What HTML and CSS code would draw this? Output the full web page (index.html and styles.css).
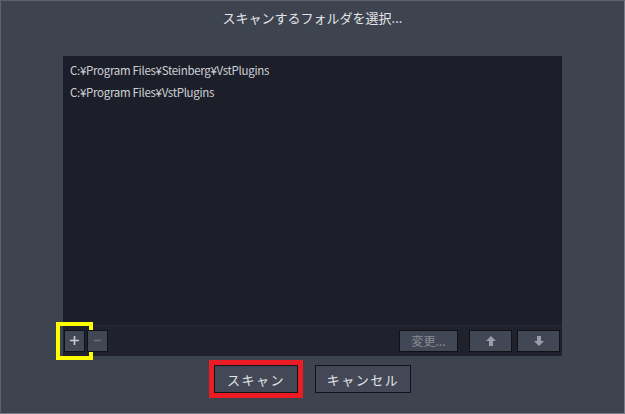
FILE: index.html
```html
<!DOCTYPE html>
<html lang="ja">
<head>
    <meta charset="UTF-8">
    <title>スキャンするフォルダを選択</title>
    <link rel="stylesheet" href="styles.css">
</head>
<body>
    <div class="dialog">
        <h1 class="dialog-title">スキャンするフォルダを選択...</h1>

        <div class="folder-panel">
            <ul class="folder-list">
                <li>C:¥Program Files¥Steinberg¥VstPlugins</li>
                <li>C:¥Program Files¥VstPlugins</li>
            </ul>
            <div class="toolbar">
                <button class="tool-btn square mark-yellow">
                    <svg width="11" height="11" viewBox="0 0 11 11"><path d="M5.5 1v9M1 5.5h9" stroke="#c9ccd3" stroke-width="1.6"/></svg>
                </button>
                <button class="tool-btn square">
                    <svg width="11" height="11" viewBox="0 0 11 11"><path d="M2 5.5h7" stroke="#6c717e" stroke-width="1.6"/></svg>
                </button>
                <span class="spacer"></span>
                <button class="tool-btn change" disabled>変更...</button>
                <button class="tool-btn arrow">
                    <svg width="12" height="12" viewBox="0 0 12 12"><path d="M6 1L11 6H8V11H4V6H1Z" fill="#9a9ea8"/></svg>
                </button>
                <button class="tool-btn arrow">
                    <svg width="12" height="12" viewBox="0 0 12 12"><path d="M6 11L11 6H8V1H4V6H1Z" fill="#9a9ea8"/></svg>
                </button>
            </div>
        </div>

        <div class="actions">
            <button class="action-btn scan mark-red">スキャン</button>
            <button class="action-btn cancel">キャンセル</button>
        </div>
    </div>
</body>
</html>
```

FILE: styles.css
```css
* {
    box-sizing: border-box;
}

body {
    margin: 0;
    background-color: #3e4350;
    font-family: "Noto Sans CJK JP", "Noto Sans", sans-serif;
}

.dialog {
    width: 625px;
    height: 414px;
    background-color: #3e4350;
    border: 1px solid #5c616c;
    border-right-color: #777b85;
    border-bottom-color: #777b85;
    display: flex;
    flex-direction: column;
    align-items: center;
}

.dialog-title {
    margin: 0;
    height: 55px;
    padding-top: 8px;
    font-size: 13px;
    font-weight: normal;
    color: #e4e5e8;
    line-height: 18px;
}

.folder-panel {
    width: 499px;
    height: 300px;
    background-color: #1c1f29;
    display: flex;
    flex-direction: column;
}

.folder-list {
    list-style: none;
    margin: 0;
    padding: 3px 0 0 7px;
    flex: 1;
    border-bottom: 1px solid #242733;
}

.folder-list li {
    font-size: 11.5px;
    line-height: 22px;
    color: #cfd1d6;
    letter-spacing: -0.3px;
}

.toolbar {
    height: 30px;
    background-color: #1f222c;
    display: flex;
    align-items: center;
    padding: 0 2px 1px 1px;
    gap: 2px;
}

.spacer {
    flex: 1;
}

.tool-btn {
    height: 22px;
    background-color: #424755;
    border: 1px solid #0f1117;
    padding: 0;
    display: flex;
    align-items: center;
    justify-content: center;
    font-family: inherit;
}

.tool-btn.square {
    width: 21px;
}

.tool-btn.change {
    width: 59px;
    font-size: 12px;
    color: #878b96;
    margin-right: 6px;
}

.tool-btn.arrow {
    width: 43px;
    margin-left: 3px;
}

.mark-yellow {
    outline: 4px solid #ffff00;
    outline-offset: 4px;
}

.actions {
    display: flex;
    gap: 17px;
    margin-top: 9px;
}

.action-btn {
    height: 28px;
    background-color: #434856;
    border: 1px solid #12141a;
    color: #e2e3e7;
    font-family: inherit;
    font-size: 13px;
    letter-spacing: 1.5px;
    padding: 0;
}

.action-btn.scan {
    width: 84px;
}

.action-btn.cancel {
    width: 96px;
}

.mark-red {
    outline: 5px solid #ed1c24;
    outline-offset: 0;
}
```
